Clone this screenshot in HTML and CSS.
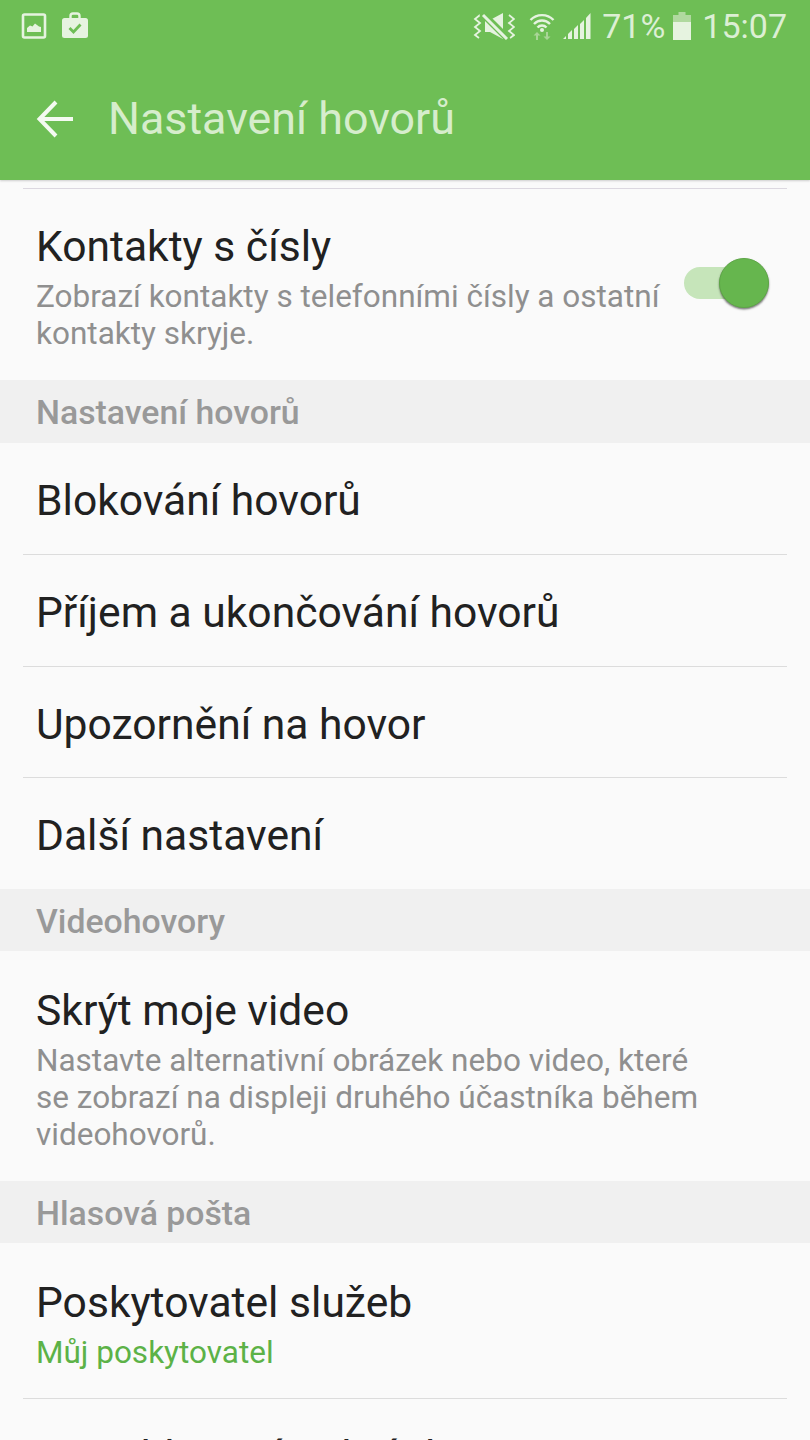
FILE: index.html
```html
<!DOCTYPE html>
<html lang="cs">
<head>
<meta charset="utf-8">
<title>Nastavení hovorů</title>
<link rel="stylesheet" href="styles.css">
</head>
<body>
<div class="screen">
  <header class="appbar">
    <div class="status">
      <div class="status-left">
        <svg class="ic-pic" viewBox="0 0 26 26"><rect x="2" y="1.500" width="22" height="23" rx="1.500" fill="none" stroke="#e6f3e0" stroke-width="2.600"/><path d="M6 19v-4l3-2.500 2.500 1 2.500-3 2 1.500 2 1.500 2 0.500v5z" fill="#e6f3e0"/></svg>
        <svg class="ic-case" viewBox="0 0 28 28"><path d="M9.500 6V4a2.500 2.500 0 0 1 2.500-2.500h4A2.500 2.500 0 0 1 18.500 4v2" fill="none" stroke="#e6f3e0" stroke-width="2.400"/><rect x="1" y="6" width="26" height="20" rx="2.500" fill="#e6f3e0"/><path d="M8.500 16l4 4 7-7.500" fill="none" stroke="#6ebe55" stroke-width="2.800"/></svg>
      </div>
      <div class="status-right">
        <svg class="ic-mute" viewBox="0 0 42 28"><path d="M7 3L2 7l5 4-5 4 5 4-5 4 4 3M36 3l5 4-5 4 5 4-5 4 5 4-4 3" fill="none" stroke="#e6f3e0" stroke-width="1.800"/><path d="M12 8h5l13-7v26l-13-7h-5z" fill="#e6f3e0"/><path d="M9 1l26 26" stroke="#6ebe55" stroke-width="7"/><path d="M10 3l24 24" stroke="#e6f3e0" stroke-width="3"/></svg>
        <svg class="ic-wifi" viewBox="0 0 26 28"><path d="M1.500 8a16 16 0 0 1 23 0M5 12a11 11 0 0 1 16 0M8.500 15.500a6 6 0 0 1 9 0" fill="none" stroke="#e6f3e0" stroke-width="2.400"/><circle cx="13" cy="18" r="2" fill="#e6f3e0"/><path d="M8 20l-3.500 3.500h2.500V28h2v-4.500h2.500zM18 28l3.500-3.500H19V20h-2v4.500h-2.500z" fill="#a9d597"/></svg>
        <svg class="ic-signal" viewBox="0 0 28 28"><path d="M0 27h3v-3zM5 27h4v-9l-4 4zM11 27h4V13l-4 4zM17 27h4V8l-4 4zM23 27h4.500V1L23 6z" fill="#e6f3e0"/></svg>
        <span class="pct">71%</span>
        <svg class="ic-batt" viewBox="0 0 18 28"><path d="M5.500 0h7v3h5.500v7H0V3h5.500z" fill="#b0d99f"/><rect y="10" width="18" height="18" fill="#e6f3e0"/></svg>
        <span class="clock">15:07</span>
      </div>
    </div>
    <div class="titlebar">
      <svg class="ic-back" viewBox="0 0 38 38"><path d="M37 19H4M20 2L3.500 19 20 36" fill="none" stroke="#f4faf1" stroke-width="4"/></svg>
      <h1 class="title">Nastavení hovorů</h1>
    </div>
  </header>
  <main class="list">
    <div class="divider first"></div>
    <div class="row row-contacts">
      <div class="row-text">
        <div class="row-title">Kontakty s čísly</div>
        <div class="row-sub">Zobrazí kontakty s telefonními čísly a ostatní<br>kontakty skryje.</div>
      </div>
      <div class="switch"><div class="track"></div><div class="thumb"></div></div>
    </div>
    <div class="section section-tall">Nastavení hovorů</div>
    <div class="row row-plain"><div class="row-title">Blokování hovorů</div></div>
    <div class="divider"></div>
    <div class="row row-plain"><div class="row-title">Příjem a ukončování hovorů</div></div>
    <div class="divider"></div>
    <div class="row row-plain row-short"><div class="row-title">Upozornění na hovor</div></div>
    <div class="divider"></div>
    <div class="row row-plain"><div class="row-title">Další nastavení</div></div>
    <div class="section">Videohovory</div>
    <div class="row row-video">
      <div class="row-text">
        <div class="row-title">Skrýt moje video</div>
        <div class="row-sub">Nastavte alternativní obrázek nebo video, které<br>se zobrazí na displeji druhého účastníka během<br>videohovorů.</div>
      </div>
    </div>
    <div class="section">Hlasová pošta</div>
    <div class="row row-provider">
      <div class="row-text">
        <div class="row-title">Poskytovatel služeb</div>
        <div class="row-sub accent">Můj poskytovatel</div>
      </div>
    </div>
    <div class="divider"></div>
    <div class="row row-plain"><div class="row-title">Moje hlasové schránky</div></div>
  </main>
</div>
</body>
</html>
```
FILE: styles.css
```css
* { box-sizing: border-box; }
html, body { margin: 0; padding: 0; }
body { width: 810px; height: 1440px; overflow: hidden; background: #fafafa; font-family: Roboto, "Noto Sans", sans-serif; }
.screen { width: 810px; height: 1440px; overflow: hidden; display: flex; flex-direction: column; }

.appbar { height: 180px; flex: none; background: #6ebe55; box-shadow: 0 1px 2px rgba(0,0,0,.18); position: relative; z-index: 1; display: flex; flex-direction: column; }
.status { height: 56px; display: flex; justify-content: space-between; align-items: center; padding: 0 23px 4px 21px; }
.status-left, .status-right { display: flex; align-items: center; }
.ic-pic { width: 26px; height: 26px; margin-right: 14px; }
.ic-case { width: 28px; height: 28px; }
.ic-mute { width: 42px; height: 28px; margin-right: 14px; }
.ic-wifi { width: 26px; height: 28px; margin-right: 8px; }
.ic-signal { width: 28px; height: 28px; margin-right: 11px; }
.ic-batt { width: 18px; height: 28px; margin: 0 11px 0 8px; }
.pct, .clock { font-size: 34px; color: #dcefd4; line-height: 40px; }
.titlebar { height: 124px; display: flex; align-items: center; padding: 2px 0 0 36px; }
.ic-back { width: 38px; height: 38px; margin-right: 34px; }
.title { margin: 0; font-size: 44.8px; font-weight: 400; color: #d6edcc; line-height: 52px; }

.list { flex: none; padding-top: 8px; background: #fafafa; }
.divider { height: 1px; margin: 0 23px; background: #dcdcdc; }
.divider.first { background: #dcd8e0; }
.row { display: flex; align-items: center; padding: 0 36px; }
.row-title { font-size: 42.6px; line-height: 48px; color: #212121; }
.row-sub { font-size: 31.5px; line-height: 37px; color: #8f8f8f; margin-top: 8px; white-space: nowrap; }
.row-sub.accent { color: #5cb247; }
.row-contacts { height: 191px; justify-content: space-between; padding-top: 5px; padding-right: 41px; }
.row-plain { height: 111px; padding-top: 3px; }
.row-short { height: 110px; }
.row-video { height: 230px; padding-top: 6px; }
.row-provider { height: 155px; padding-top: 8px; }
.section { height: 62px; background: #f0f0f0; color: #999; font-size: 33.8px; font-weight: 500; line-height: 62px; padding: 2px 36px 0; }
.section-tall { height: 63px; }

.switch { position: relative; width: 85px; height: 50px; flex: none; margin-top: -8px; }
.track { position: absolute; left: 0; top: 9px; width: 64px; height: 32px; border-radius: 16px; background: #c6e5ba; }
.thumb { position: absolute; right: 0; top: 0; width: 50px; height: 50px; border-radius: 50%; background: #66b64e; border: 1px solid #5da646; box-shadow: 0 1.500px 2px rgba(0,0,0,.5); }
```
